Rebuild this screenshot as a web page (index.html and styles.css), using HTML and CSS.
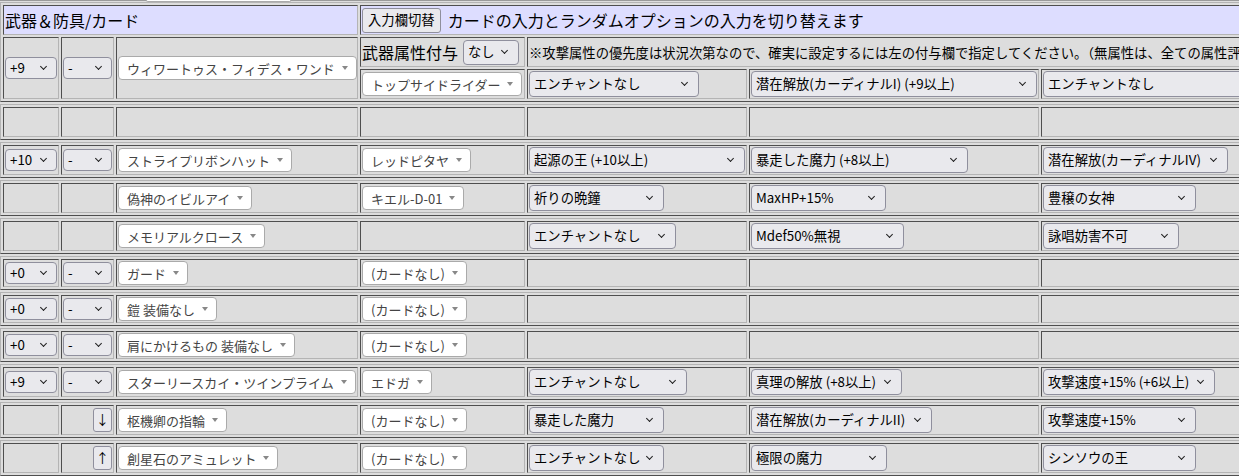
FILE: index.html
```html
<!DOCTYPE html>
<html lang="ja">
<head>
<meta charset="utf-8">
<title>武器＆防具/カード</title>
<link rel="stylesheet" href="styles.css">
</head>
<body>
<div class="page">

  <div class="prev"><span class="prev-box"></span></div>

  <div class="grp">
    <div class="cell head span-left">武器＆防具/カード</div>
    <div class="cell head span-right"><button class="btn">入力欄切替</button><span class="head-note">カードの入力とランダムオプションの入力を切り替えます</span></div>

    <div class="cell rows2"><span class="sel sm w52">+9</span></div>
    <div class="cell rows2"><span class="sel sm w49">-</span></div>
    <div class="cell rows2"><span class="pick">ウィワートゥス・フィデス・ワンド</span></div>
    <div class="cell attr"><span class="attr-label">武器属性付与</span><span class="sel h25 w56">なし</span></div>
    <div class="cell note">※攻撃属性の優先度は状況次第なので、確実に設定するには左の付与欄で指定してください。（無属性は、全ての属性評価で同じ値になります）</div>
    <div class="cell"><span class="pick">トップサイドライダー</span></div>
    <div class="cell"><span class="sel w170">エンチャントなし</span></div>
    <div class="cell"><span class="sel w286">潜在解放(カーディナルI) (+9以上)</span></div>
    <div class="cell"><span class="sel w290">エンチャントなし</span></div>
  </div>

  <div class="grp">
    <div class="cell"></div><div class="cell"></div><div class="cell"></div><div class="cell"></div>
    <div class="cell"></div><div class="cell"></div><div class="cell"></div>
  </div>

  <div class="grp">
    <div class="cell"><span class="sel sm w52">+10</span></div>
    <div class="cell"><span class="sel sm w49">-</span></div>
    <div class="cell"><span class="pick">ストライプリボンハット</span></div>
    <div class="cell"><span class="pick">レッドピタヤ</span></div>
    <div class="cell"><span class="sel w216">起源の王 (+10以上)</span></div>
    <div class="cell"><span class="sel w217">暴走した魔力 (+8以上)</span></div>
    <div class="cell"><span class="sel w185">潜在解放(カーディナルIV)</span></div>
  </div>

  <div class="grp">
    <div class="cell"></div>
    <div class="cell"></div>
    <div class="cell"><span class="pick">偽神のイビルアイ</span></div>
    <div class="cell"><span class="pick">キエル-D-01</span></div>
    <div class="cell"><span class="sel w135">祈りの晩鐘</span></div>
    <div class="cell"><span class="sel w135">MaxHP+15%</span></div>
    <div class="cell"><span class="sel w153">豊穣の女神</span></div>
  </div>

  <div class="grp">
    <div class="cell"></div>
    <div class="cell"></div>
    <div class="cell"><span class="pick">メモリアルクロース</span></div>
    <div class="cell"></div>
    <div class="cell"><span class="sel w147">エンチャントなし</span></div>
    <div class="cell"><span class="sel w153">Mdef50%無視</span></div>
    <div class="cell"><span class="sel w136">詠唱妨害不可</span></div>
  </div>

  <div class="grp short">
    <div class="cell"><span class="sel sm w52">+0</span></div>
    <div class="cell"><span class="sel sm w49">-</span></div>
    <div class="cell"><span class="pick">ガード</span></div>
    <div class="cell"><span class="pick">(カードなし)</span></div>
    <div class="cell"></div><div class="cell"></div><div class="cell"></div>
  </div>

  <div class="grp short">
    <div class="cell"><span class="sel sm w52">+0</span></div>
    <div class="cell"><span class="sel sm w49">-</span></div>
    <div class="cell"><span class="pick">鎧 装備なし</span></div>
    <div class="cell"><span class="pick">(カードなし)</span></div>
    <div class="cell"></div><div class="cell"></div><div class="cell"></div>
  </div>

  <div class="grp short">
    <div class="cell"><span class="sel sm w52">+0</span></div>
    <div class="cell"><span class="sel sm w49">-</span></div>
    <div class="cell"><span class="pick">肩にかけるもの 装備なし</span></div>
    <div class="cell"><span class="pick">(カードなし)</span></div>
    <div class="cell"></div><div class="cell"></div><div class="cell"></div>
  </div>

  <div class="grp">
    <div class="cell"><span class="sel sm w52">+9</span></div>
    <div class="cell"><span class="sel sm w49">-</span></div>
    <div class="cell"><span class="pick">スターリースカイ・ツインプライム</span></div>
    <div class="cell"><span class="pick">エドガ</span></div>
    <div class="cell"><span class="sel w158">エンチャントなし</span></div>
    <div class="cell"><span class="sel w151">真理の解放 (+8以上)</span></div>
    <div class="cell"><span class="sel w172">攻撃速度+15% (+6以上)</span></div>
  </div>

  <div class="grp">
    <div class="cell"></div>
    <div class="cell end"><button class="btn move">↓</button></div>
    <div class="cell"><span class="pick">枢機卿の指輪</span></div>
    <div class="cell"><span class="pick">(カードなし)</span></div>
    <div class="cell"><span class="sel w135">暴走した魔力</span></div>
    <div class="cell"><span class="sel w181">潜在解放(カーディナルII)</span></div>
    <div class="cell"><span class="sel w153">攻撃速度+15%</span></div>
  </div>

  <div class="grp">
    <div class="cell"></div>
    <div class="cell end"><button class="btn move">↑</button></div>
    <div class="cell"><span class="pick">創星石のアミュレット</span></div>
    <div class="cell"><span class="pick">(カードなし)</span></div>
    <div class="cell"><span class="sel w135">エンチャントなし</span></div>
    <div class="cell"><span class="sel w136">極限の魔力</span></div>
    <div class="cell"><span class="sel w153">シンソウの王</span></div>
  </div>

</div>
</body>
</html>
```

FILE: styles.css
```css
html, body {
  margin: 0;
  padding: 0;
  overflow: hidden;
  background: #dddddd;
}

body {
  font-family: "Noto Sans CJK JP", "Noto Sans", sans-serif;
  font-size: 13.33px;
  color: #000;
}

.page {
  width: max-content;
  display: flex;
  flex-direction: column;
}

/* bottom edge of the block above, cut off by the viewport */
.prev {
  box-sizing: border-box;
  height: 2px;
  border-top: 1px solid #9a9a9a;
  display: flex;
  padding-left: 146px;
}

.prev-box {
  box-sizing: border-box;
  width: 145px;
  height: 1px;
  margin-top: -1px;
  height: 2px;
  background: #ffffff;
  border: 1px solid #aaaaaa;
  border-top: none;
  border-radius: 0 0 3px 3px;
}

.grp {
  display: grid;
  grid-template-columns: 56px 53px 242px 165px 220px 290px 300px;
  grid-auto-rows: 30px;
  gap: 2px;
  padding: 2px;
  border: 1px solid;
  border-color: #b4b4b4 #4e4e4e #4e4e4e #b4b4b4;
  width: max-content;
}

.grp + .grp {
  margin-top: 2px;
}

.grp.short {
  grid-auto-rows: 28px;
}

.cell {
  box-sizing: border-box;
  border: 1px solid;
  border-color: #4e4e4e #b4b4b4 #b4b4b4 #4e4e4e;
  padding: 1px;
  display: flex;
  align-items: center;
  min-width: 0;
  overflow: hidden;
  white-space: nowrap;
}

.cell.end {
  justify-content: flex-end;
}

.head {
  background: #ddddff;
  font-size: 16px;
}

.span-left {
  grid-column: 1 / 4;
}

.span-right {
  grid-column: 4 / 8;
}

.rows2 {
  grid-row: span 2;
}

.note {
  grid-column: 5 / 8;
  font-size: 13.33px;
}

.attr-label {
  font-size: 16px;
  margin-right: 5px;
}

.head-note {
  margin-left: 7px;
}

/* native-looking select */
.sel {
  box-sizing: border-box;
  flex: none;
  display: inline-flex;
  align-items: center;
  height: 26px;
  padding-left: 4px;
  border: 1px solid #8f8f9d;
  border-radius: 4px;
  background: #e9e9ed;
  color: #000;
  font-size: 13.33px;
  line-height: 1;
}

.sel::after {
  content: "";
  margin-left: auto;
  margin-right: 11px;
  width: 4px;
  height: 4px;
  border-right: 1.5px solid #1e1e1e;
  border-bottom: 1.5px solid #1e1e1e;
  transform: translateY(-2px) rotate(45deg);
}

.sel.sm { height: 22px; }
.sel.sm::after { margin-right: 10px; }
.sel.h25 { height: 25px; }

.w49 { width: 49px; }
.w52 { width: 52px; }
.w56 { width: 56px; }
.w135 { width: 135px; }
.w136 { width: 136px; }
.w147 { width: 147px; }
.w151 { width: 151px; }
.w153 { width: 153px; }
.w158 { width: 158px; }
.w170 { width: 170px; }
.w172 { width: 172px; }
.w181 { width: 181px; }
.w185 { width: 185px; }
.w216 { width: 216px; }
.w217 { width: 217px; }
.w286 { width: 286px; }
.w290 { width: 290px; }

/* select2-like picker */
.pick {
  box-sizing: border-box;
  flex: none;
  display: inline-flex;
  align-items: center;
  height: 24px;
  padding: 0 8px;
  border: 1px solid #aaaaaa;
  border-radius: 4px;
  background: #ffffff;
  color: #444444;
  font-size: 13px;
  line-height: 1;
}

.pick::after {
  content: "";
  margin-left: 7px;
  border-style: solid;
  border-width: 4px 3px 0 3px;
  border-color: #888888 transparent transparent transparent;
}

.btn {
  box-sizing: border-box;
  height: 25px;
  padding: 0 5px;
  border: 1px solid #8f8f9d;
  border-radius: 3px;
  background: #e9e9ed;
  color: #000;
  font-family: inherit;
  font-size: 13.33px;
  line-height: 1;
}

.btn.move {
  width: 19px;
  height: 24px;
  padding: 0;
}
```
